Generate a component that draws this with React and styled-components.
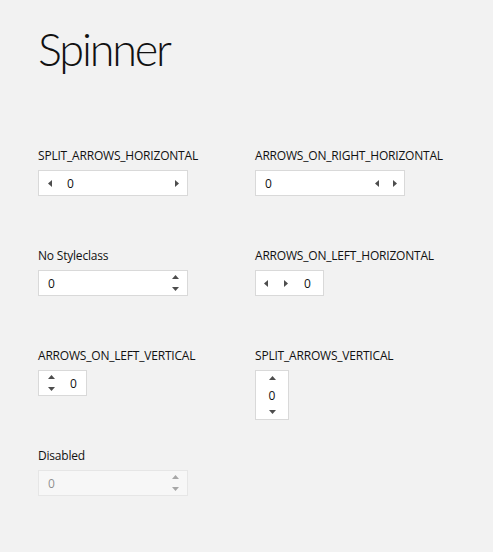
import React from 'react';
import styled, { createGlobalStyle, css } from 'styled-components';

const GlobalStyle = createGlobalStyle`
  html, body {
    margin: 0;
    background: #f2f2f2;
  }
  body {
    font-family: "Open Sans", "Noto Sans", "Liberation Sans", sans-serif;
    color: #111;
  }
`;

const Page = styled.div`
  width: 493px;
  height: 552px;
  padding: 0 0 0 38px;
  box-sizing: border-box;
  overflow: hidden;
`;

const Title = styled.h1`
  margin: 0;
  padding-top: 23px;
  font-family: Lato, "Open Sans", sans-serif;
  font-size: 45px;
  font-weight: 300;
  line-height: 52px;
  letter-spacing: -2.2px;
`;

const Grid = styled.div`
  display: grid;
  grid-template-columns: 217px 217px;
  grid-auto-rows: 100px;
  margin-top: 72px;
`;

const Cell = styled.div`
  display: flex;
  flex-direction: column;
  align-items: flex-start;
`;

const Label = styled.div`
  font-size: 12px;
  line-height: 16px;
  height: 16px;
  margin: 1px 0 6px;
  letter-spacing: -0.2px;
  white-space: nowrap;
`;

const Box = styled.div`
  display: flex;
  flex-direction: ${p => (p.$column ? 'column' : 'row')};
  align-items: stretch;
  width: ${p => p.$w}px;
  height: ${p => p.$h || 26}px;
  box-sizing: border-box;
  background: #fff;
  border: 1px solid #d9d9d9;
  ${p => p.$disabled && css`
    opacity: 0.45;
  `}
`;

const Value = styled.div`
  flex: 1;
  display: flex;
  align-items: center;
  justify-content: ${p => (p.$center ? 'center' : 'flex-start')};
  padding-left: ${p => p.$pad || 0}px;
  font-size: 12px;
  color: #111;
`;

const Btn = styled.div`
  flex: 0 0 ${p => p.$size}px;
  display: flex;
  align-items: center;
  justify-content: center;
`;

const Stack = styled.div`
  flex: 0 0 ${p => p.$size}px;
  display: flex;
  flex-direction: column;
  justify-content: center;
  align-items: center;
  gap: 8px;
`;

const Arrow = ({ dir }) => {
  const pts = {
    left: '4,0 4,7 0,3.5',
    right: '0,0 0,7 4,3.5',
    up: '3.5,0 7,4 0,4',
    down: '0,0 7,0 3.5,4',
  }[dir];
  const horiz = dir === 'left' || dir === 'right';
  return (
    <svg width={horiz ? 4 : 7} height={horiz ? 7 : 4} viewBox={horiz ? '0 0 4 7' : '0 0 7 4'}>
      <polygon points={pts} fill="#4d4d4d" />
    </svg>
  );
};

const Spinner = ({ kind, disabled }) => {
  switch (kind) {
    case 'split-h':
      return (
        <Box $w={150}>
          <Btn $size={21}><Arrow dir="left" /></Btn>
          <Value $pad={7}>0</Value>
          <Btn $size={21}><Arrow dir="right" /></Btn>
        </Box>
      );
    case 'right-h':
      return (
        <Box $w={150}>
          <Value $pad={9}>0</Value>
          <Btn $size={18}><Arrow dir="left" /></Btn>
          <Btn $size={18}><Arrow dir="right" /></Btn>
        </Box>
      );
    case 'left-h':
      return (
        <Box $w={69}>
          <Btn $size={20}><Arrow dir="left" /></Btn>
          <Btn $size={20}><Arrow dir="right" /></Btn>
          <Value $pad={8}>0</Value>
        </Box>
      );
    case 'left-v':
      return (
        <Box $w={49}>
          <Stack $size={24}><Arrow dir="up" /><Arrow dir="down" /></Stack>
          <Value $pad={7}>0</Value>
        </Box>
      );
    case 'split-v':
      return (
        <Box $w={34} $h={50} $column>
          <Btn $size={14}><Arrow dir="up" /></Btn>
          <Value $center>0</Value>
          <Btn $size={14}><Arrow dir="down" /></Btn>
        </Box>
      );
    default:
      return (
        <Box $w={150} $disabled={disabled}>
          <Value $pad={9}>0</Value>
          <Stack $size={24}><Arrow dir="up" /><Arrow dir="down" /></Stack>
        </Box>
      );
  }
};

const items = [
  { label: 'SPLIT_ARROWS_HORIZONTAL', kind: 'split-h' },
  { label: 'ARROWS_ON_RIGHT_HORIZONTAL', kind: 'right-h' },
  { label: 'No Styleclass', kind: 'plain' },
  { label: 'ARROWS_ON_LEFT_HORIZONTAL', kind: 'left-h' },
  { label: 'ARROWS_ON_LEFT_VERTICAL', kind: 'left-v' },
  { label: 'SPLIT_ARROWS_VERTICAL', kind: 'split-v' },
  { label: 'Disabled', kind: 'plain', disabled: true },
];

export default function App() {
  return (
    <>
      <GlobalStyle />
      <Page>
        <Title>Spinner</Title>
        <Grid>
          {items.map(it => (
            <Cell key={it.label}>
              <Label>{it.label}</Label>
              <Spinner kind={it.kind} disabled={it.disabled} />
            </Cell>
          ))}
        </Grid>
      </Page>
    </>
  );
}
